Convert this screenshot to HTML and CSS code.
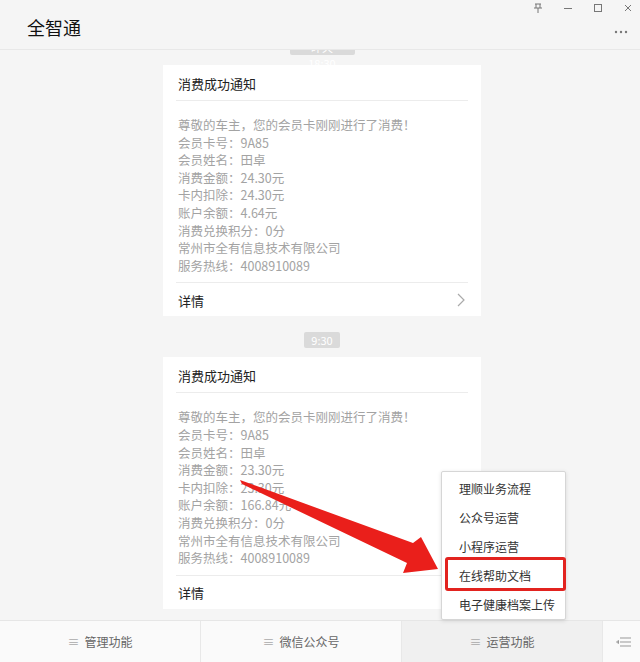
FILE: index.html
```html
<!DOCTYPE html>
<html lang="zh-CN">

<head>
    <meta charset="UTF-8">
    <meta name="viewport" content="width=device-width, initial-scale=1.0">
    <title>全智通</title>
    <link rel="stylesheet" href="styles.css">
</head>

<body>
    <div class="app">
        <div class="header">
            <span class="title">全智通</span>
            <div class="win-ctrl">
                <svg width="10" height="10" viewBox="0 0 10 10"><path d="M2 1h6M3 1v4M7 1v4M1 5h8M5 5v5" stroke="#777" stroke-width="1" fill="none"/></svg>
                <svg width="10" height="10" viewBox="0 0 10 10"><path d="M1 5.5h8" stroke="#777" stroke-width="1"/></svg>
                <svg width="10" height="10" viewBox="0 0 10 10"><rect x="1.5" y="1.5" width="7" height="7" stroke="#777" fill="none"/></svg>
                <svg width="10" height="10" viewBox="0 0 10 10"><path d="M2 2l6 6M8 2l-6 6" stroke="#777" stroke-width="1"/></svg>
            </div>
            <svg class="more" width="14" height="4" viewBox="0 0 14 4"><circle cx="2" cy="2" r="1.2" fill="#777"/><circle cx="7" cy="2" r="1.2" fill="#777"/><circle cx="12" cy="2" r="1.2" fill="#777"/></svg>
        </div>

        <div class="chat">
            <div class="time cut">昨天 18:30</div>
            <div class="card">
                <div class="card-title">消费成功通知</div>
                <div class="card-body">
                    <p>尊敬的车主，您的会员卡刚刚进行了消费！</p>
                    <p>会员卡号：9A85</p>
                    <p>会员姓名：田卓</p>
                    <p>消费金额：24.30元</p>
                    <p>卡内扣除：24.30元</p>
                    <p>账户余额：4.64元</p>
                    <p>消费兑换积分：0分</p>
                    <p>常州市全有信息技术有限公司</p>
                    <p>服务热线：4008910089</p>
                </div>
                <div class="card-foot">
                    <span>详情</span>
                    <svg width="8" height="14" viewBox="0 0 8 14"><path d="M1 1l6 6-6 6" stroke="#aaa" stroke-width="1.2" fill="none"/></svg>
                </div>
            </div>

            <div class="time">9:30</div>
            <div class="card">
                <div class="card-title">消费成功通知</div>
                <div class="card-body">
                    <p>尊敬的车主，您的会员卡刚刚进行了消费！</p>
                    <p>会员卡号：9A85</p>
                    <p>会员姓名：田卓</p>
                    <p>消费金额：23.30元</p>
                    <p>卡内扣除：23.30元</p>
                    <p>账户余额：166.84元</p>
                    <p>消费兑换积分：0分</p>
                    <p>常州市全有信息技术有限公司</p>
                    <p>服务热线：4008910089</p>
                </div>
                <div class="card-foot">
                    <span>详情</span>
                </div>
            </div>
        </div>

        <div class="menu-bar">
            <div class="tab"><span class="ico">≡</span>管理功能</div>
            <div class="tab"><span class="ico">≡</span>微信公众号</div>
            <div class="tab active"><span class="ico">≡</span>运营功能</div>
            <div class="kbd">
                <svg width="16" height="12" viewBox="0 0 16 12"><path d="M4 2h11M4 6h11M4 10h11M0.5 6l2-1.5v3z" stroke="#999" stroke-width="1" fill="none"/></svg>
            </div>
        </div>

        <!-- 运营功能子菜单 -->
        <div class="sub-menu">
            <div class="sub-item">理顺业务流程</div>
            <div class="sub-item">公众号运营</div>
            <div class="sub-item">小程序运营</div>
            <div class="sub-item marked">在线帮助文档</div>
            <div class="sub-item">电子健康档案上传</div>
        </div>

        <svg class="arrow" width="640" height="662" viewBox="0 0 640 662">
            <path d="M240 480 L413 543 L421 537 L438 569 L403 573 L407 563 L242 484 Z" fill="#ea1f1b"/>
        </svg>
    </div>
</body>

</html>
```

FILE: styles.css
```css
* {
    box-sizing: border-box;
    margin: 0;
    padding: 0;
}

body {
    font-family: "Noto Sans CJK SC", "Liberation Sans", sans-serif;
    background: #f5f5f5;
}

.app {
    position: relative;
    width: 640px;
    height: 662px;
    display: flex;
    flex-direction: column;
    overflow: hidden;
}

.header {
    position: relative;
    height: 50px;
    flex-shrink: 0;
    display: flex;
    align-items: center;
    padding: 4px 0 0 27px;
    border-bottom: 1px solid #e8e8e8;
    background: #f5f5f5;
    z-index: 2;
}

.header .title {
    font-size: 18px;
    color: #111;
}

.win-ctrl {
    position: absolute;
    top: 3px;
    right: 7px;
    display: flex;
    gap: 20px;
}

.more {
    position: absolute;
    right: 12px;
    top: 30px;
}

.chat {
    flex: 1;
    display: flex;
    flex-direction: column;
    align-items: center;
    padding-left: 4px;
    overflow: hidden;
}

.time {
    height: 16px;
    line-height: 16px;
    padding: 0 7px;
    font-size: 11px;
    color: #fff;
    background: #dadada;
    border-radius: 2px;
    margin: 16px 0 9px;
}

.time.cut {
    margin: -11px 0 10px 0;
    width: 65px;
    text-align: center;
}

.card {
    width: 318px;
    background: #fff;
    padding: 0 13px;
}

.card-title {
    height: 36px;
    line-height: 37px;
    font-size: 13px;
    color: #222;
    padding-left: 2px;
    border-bottom: 1px solid #ececec;
}

.card-body {
    padding: 15px 0 8px 2px;
    font-size: 12.5px;
    line-height: 17.6px;
    color: #a3a3a3;
}

.card-foot {
    height: 34px;
    display: flex;
    align-items: center;
    justify-content: space-between;
    padding: 1px 3px 0 2px;
    border-top: 1px solid #ececec;
    font-size: 13px;
    color: #222;
}

.menu-bar {
    height: 42px;
    flex-shrink: 0;
    display: flex;
    background: #fafafa;
    border-top: 1px solid #e6e6e6;
}

.tab {
    width: 201px;
    display: flex;
    align-items: center;
    justify-content: center;
    font-size: 12px;
    color: #666;
    border-right: 1px solid #e8e8e8;
}

.tab .ico {
    color: #aaa;
    margin-right: 5px;
    font-size: 12px;
}

.tab.active {
    background: #f0f0f0;
}

.kbd {
    flex: 1;
    display: flex;
    align-items: center;
    justify-content: center;
    padding-left: 4px;
}

.sub-menu {
    position: absolute;
    left: 441px;
    top: 471px;
    width: 125px;
    padding-top: 2px;
    background: #fff;
    border: 1px solid #d6d6d6;
    border-radius: 2px;
    box-shadow: 0 1px 4px rgba(0, 0, 0, 0.12);
    z-index: 3;
}

.sub-item {
    position: relative;
    height: 29px;
    line-height: 29px;
    padding-left: 17px;
    font-size: 12px;
    color: #333;
}

.sub-item.marked::after {
    content: "";
    position: absolute;
    left: 3px;
    right: -1px;
    top: -4px;
    bottom: -1px;
    border: 3px solid #e2231f;
    border-radius: 3px;
}

.arrow {
    position: absolute;
    left: 0;
    top: 0;
    pointer-events: none;
    z-index: 4;
}
```
